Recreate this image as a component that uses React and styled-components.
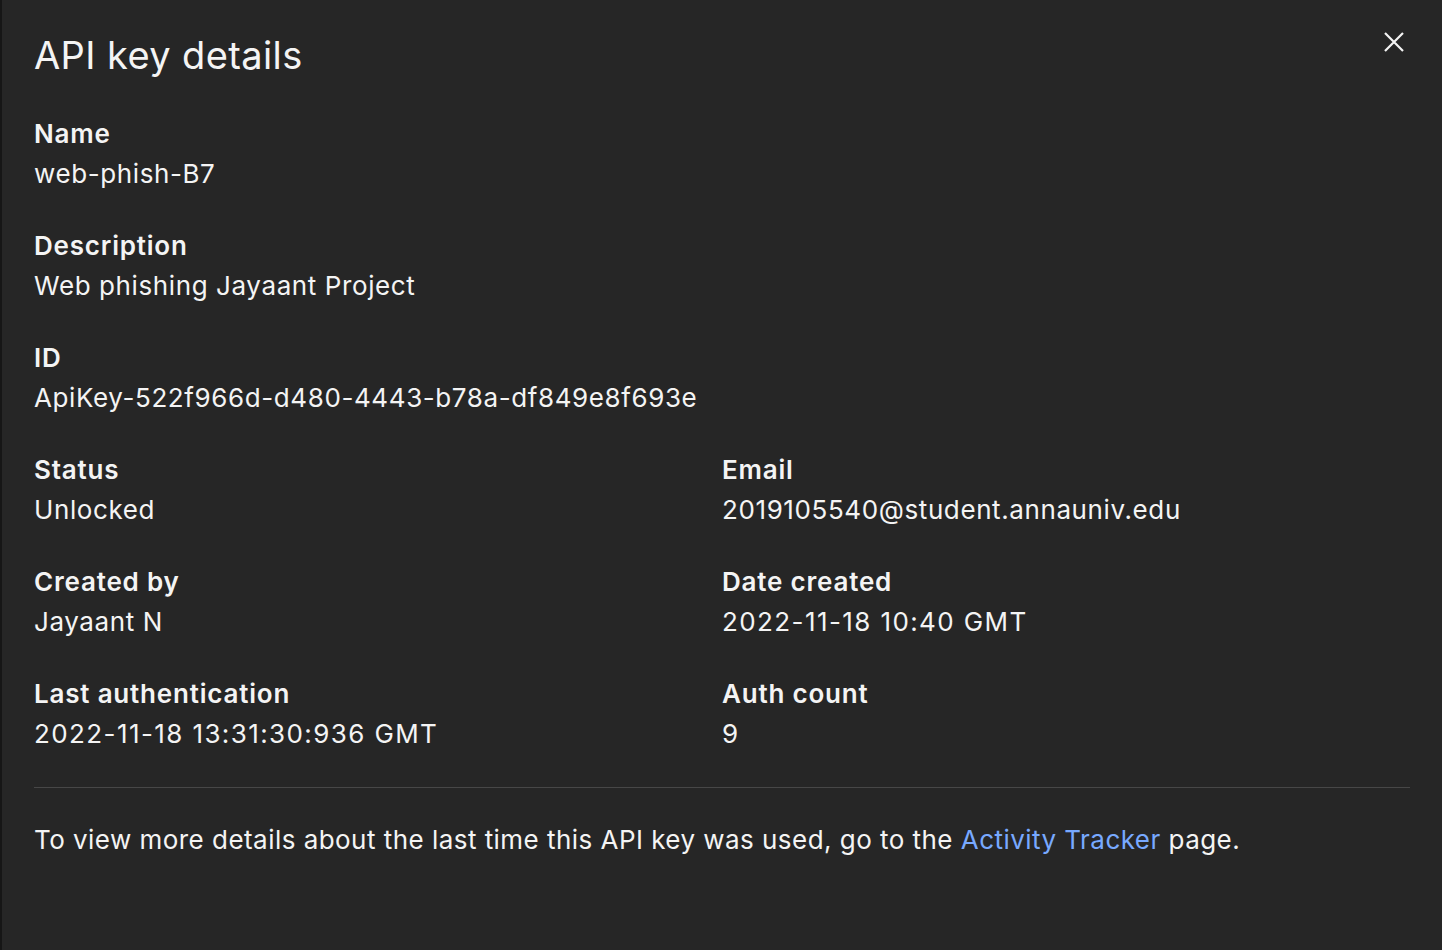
import React from 'react';
import styled, { createGlobalStyle } from 'styled-components';

const GlobalStyle = createGlobalStyle`
  html, body {
    margin: 0;
    padding: 0;
    background: #262626;
  }
  body {
    font-family: Inter, "Noto Sans", sans-serif;
  }
`;

const Page = styled.div`
  display: flex;
  width: 1442px;
  height: 950px;
  background: #161616;
`;

const Modal = styled.div`
  position: relative;
  flex: 1;
  margin-left: 2px;
  background: #262626;
  padding: 30px 32px 0 32px;
  color: #f4f4f4;
  box-sizing: border-box;
`;

const Title = styled.h2`
  margin: 0 0 34px 0;
  font-size: 38px;
  line-height: 50px;
  font-weight: 400;
  letter-spacing: 0.4px;
  color: #f4f4f4;
`;

const CloseButton = styled.button`
  position: absolute;
  top: 20px;
  right: 26px;
  width: 44px;
  height: 44px;
  border: none;
  background: transparent;
  padding: 0;
  display: flex;
  align-items: center;
  justify-content: center;
  cursor: pointer;
`;

const Fields = styled.div`
  display: grid;
  grid-template-columns: 1fr 1fr;
  row-gap: 32px;
`;

const Field = styled.div`
  grid-column: ${(p) => (p.wide ? '1 / span 2' : 'auto')};
`;

const Label = styled.div`
  font-size: 26px;
  line-height: 40px;
  font-weight: 600;
  letter-spacing: 0.8px;
  color: #f4f4f4;
`;

const Value = styled.div`
  font-size: 26px;
  line-height: 40px;
  font-weight: 400;
  letter-spacing: ${(p) => (p.numeric ? '1.4px' : '0.6px')};
  color: #f4f4f4;
`;

const Divider = styled.hr`
  margin: 33px 0 32px 0;
  border: none;
  height: 1px;
  background: #474747;
`;

const Footer = styled.p`
  margin: 0;
  font-size: 26px;
  line-height: 40px;
  letter-spacing: 0.46px;
  color: #f4f4f4;
`;

const TrackerLink = styled.a`
  color: #78a9ff;
  text-decoration: none;
`;

const fields = [
  { label: 'Name', value: 'web-phish-B7', wide: true },
  { label: 'Description', value: 'Web phishing Jayaant Project', wide: true },
  { label: 'ID', value: 'ApiKey-522f966d-d480-4443-b78a-df849e8f693e', wide: true },
  { label: 'Status', value: 'Unlocked' },
  { label: 'Email', value: '2019105540@student.annauniv.edu' },
  { label: 'Created by', value: 'Jayaant N' },
  { label: 'Date created', value: '2022-11-18 10:40 GMT', numeric: true },
  { label: 'Last authentication', value: '2022-11-18 13:31:30:936 GMT', numeric: true },
  { label: 'Auth count', value: '9' },
];

export default function App() {
  return (
    <>
      <GlobalStyle />
      <Page>
        <Modal>
          <Title>API key details</Title>
          <CloseButton aria-label="Close">
            <svg width="24" height="24" viewBox="0 0 24 24">
              <path d="M3 3 L21 21 M21 3 L3 21" stroke="#f4f4f4" strokeWidth="2.2" fill="none" />
            </svg>
          </CloseButton>
          <Fields>
            {fields.map((f) => (
              <Field key={f.label} wide={f.wide}>
                <Label>{f.label}</Label>
                <Value numeric={f.numeric}>{f.value}</Value>
              </Field>
            ))}
          </Fields>
          <Divider />
          <Footer>
            To view more details about the last time this API key was used, go to the{' '}
            <TrackerLink href="#">Activity Tracker</TrackerLink> page.
          </Footer>
        </Modal>
      </Page>
    </>
  );
}
